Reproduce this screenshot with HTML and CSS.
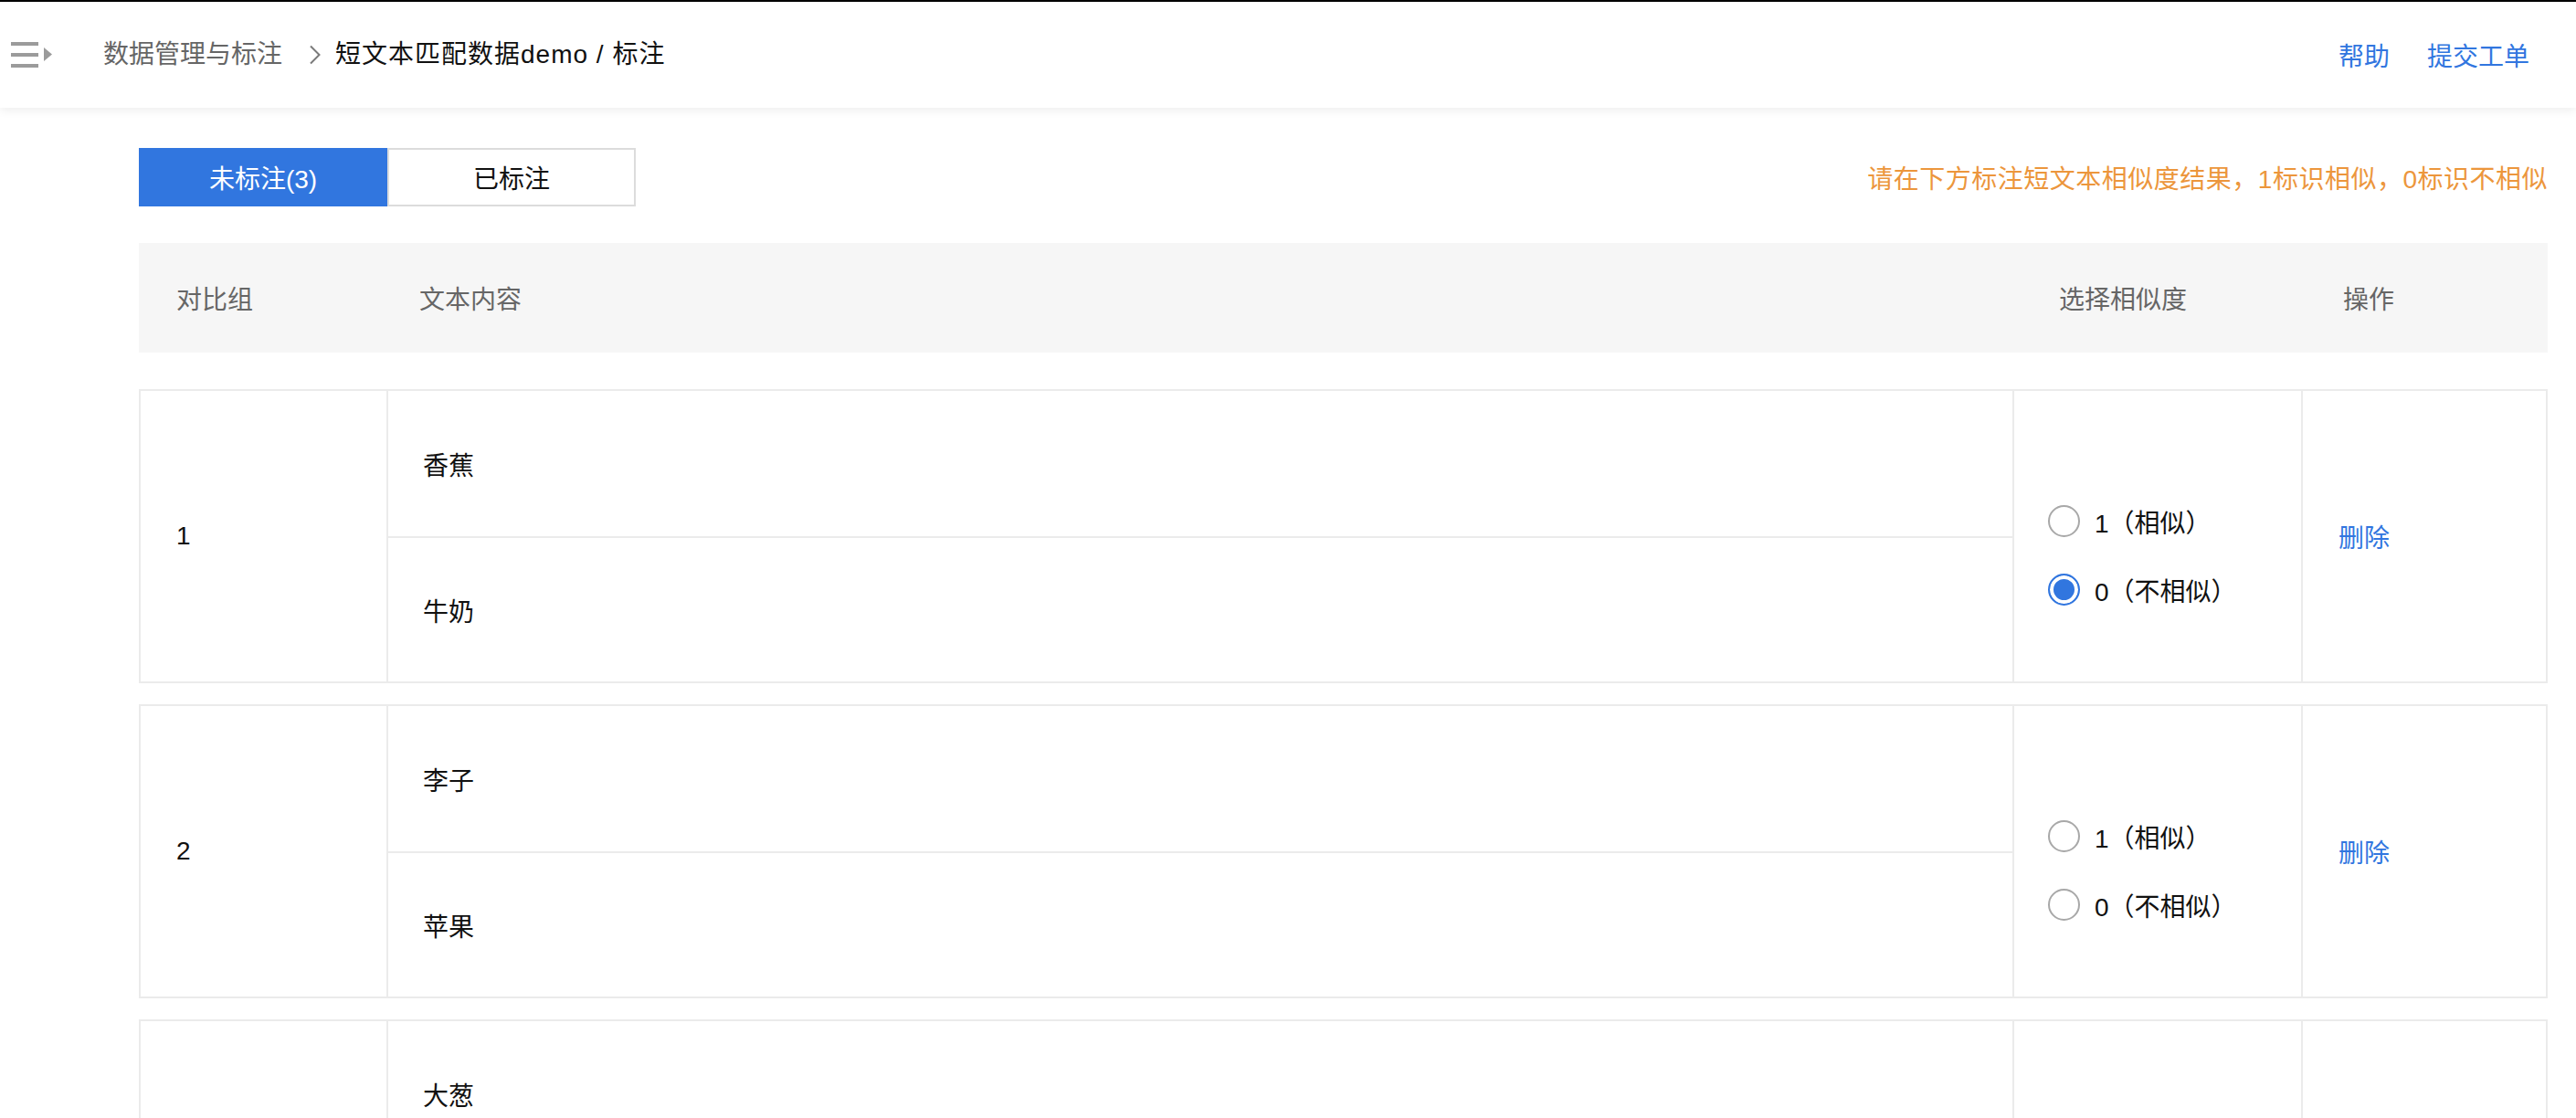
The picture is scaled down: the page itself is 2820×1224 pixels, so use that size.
FILE: index.html
```html
<!DOCTYPE html>
<html lang="zh-CN">
<head>
<meta charset="utf-8">
<title>短文本匹配数据demo / 标注</title>
<link rel="stylesheet" href="styles.css">
</head>
<body>
<header class="topbar">
  <svg class="menu-icon" width="46" height="28" viewBox="0 0 46 28" aria-hidden="true">
    <rect x="0" y="0" width="30" height="4" fill="#9b9b9b"/>
    <rect x="0" y="12" width="30" height="4" fill="#9b9b9b"/>
    <rect x="0" y="24" width="30" height="4" fill="#9b9b9b"/>
    <path d="M36 6 L45 13.5 L36 21 Z" fill="#9b9b9b"/>
  </svg>
  <nav class="crumbs">
    <span class="crumb-parent">数据管理与标注</span>
    <svg class="crumb-sep" width="14" height="22" viewBox="0 0 14 22" aria-hidden="true">
      <path d="M2 1.5 L11.5 11 L2 20.5" fill="none" stroke="#7a7a7a" stroke-width="2"/>
    </svg>
    <span class="crumb-current">短文本匹配数据demo / 标注</span>
  </nav>
  <div class="top-links">
    <a class="top-link">帮助</a>
    <a class="top-link">提交工单</a>
  </div>
</header>

<main class="main">
  <div class="toolbar">
    <div class="tabs">
      <div class="tab tab-active">未标注(3)</div>
      <div class="tab">已标注</div>
    </div>
    <div class="hint">请在下方标注短文本相似度结果，1标识相似，0标识不相似</div>
  </div>

  <div class="thead">
    <div class="th th-group">对比组</div>
    <div class="th th-text">文本内容</div>
    <div class="th th-sim">选择相似度</div>
    <div class="th th-op">操作</div>
  </div>

  <div class="rows">
    <div class="row">
      <div class="cell cell-group">1</div>
      <div class="cell cell-texts">
        <div class="text-line">香蕉</div>
        <div class="text-line text-line-2">牛奶</div>
      </div>
      <div class="cell cell-sim">
        <label class="radio"><span class="radio-dot"></span><span class="radio-label">1（相似）</span></label>
        <label class="radio"><span class="radio-dot radio-dot-on"></span><span class="radio-label">0（不相似）</span></label>
      </div>
      <div class="cell cell-op"><a class="op-link">删除</a></div>
    </div>

    <div class="row">
      <div class="cell cell-group">2</div>
      <div class="cell cell-texts">
        <div class="text-line">李子</div>
        <div class="text-line text-line-2">苹果</div>
      </div>
      <div class="cell cell-sim">
        <label class="radio"><span class="radio-dot"></span><span class="radio-label">1（相似）</span></label>
        <label class="radio"><span class="radio-dot"></span><span class="radio-label">0（不相似）</span></label>
      </div>
      <div class="cell cell-op"><a class="op-link">删除</a></div>
    </div>

    <div class="row">
      <div class="cell cell-group">3</div>
      <div class="cell cell-texts">
        <div class="text-line">大葱</div>
        <div class="text-line text-line-2">洋葱</div>
      </div>
      <div class="cell cell-sim">
        <label class="radio"><span class="radio-dot"></span><span class="radio-label">1（相似）</span></label>
        <label class="radio"><span class="radio-dot"></span><span class="radio-label">0（不相似）</span></label>
      </div>
      <div class="cell cell-op"><a class="op-link">删除</a></div>
    </div>
  </div>
</main>
</body>
</html>
```

FILE: styles.css
```css
* {
  box-sizing: border-box;
}

html, body {
  margin: 0;
  padding: 0;
  background: #ffffff;
}

body {
  font-family: "Liberation Sans", "Noto Sans CJK SC", sans-serif;
  font-size: 28px;
  color: #1c1c1c;
}

/* ---------- top bar ---------- */
.topbar {
  position: relative;
  z-index: 2;
  height: 118px;
  border-top: 2px solid #000000;
  background: #ffffff;
  display: flex;
  align-items: center;
  padding: 0 51px 0 12px;
  box-shadow: 0 3px 10px rgba(0, 0, 0, 0.07);
}

.menu-icon {
  display: block;
  flex: none;
}

.crumbs {
  display: flex;
  align-items: center;
  margin-left: 55px;
  line-height: 40px;
}

.crumb-parent {
  color: #666666;
}

.crumb-sep {
  display: block;
  margin: 0 15px 0 29px;
}

.crumb-current {
  color: #111111;
  letter-spacing: 1px;
}

.top-links {
  margin-left: auto;
  display: flex;
  gap: 41px;
}

.top-link {
  color: #3176df;
  cursor: pointer;
}

/* ---------- main ---------- */
.main {
  padding: 44px 31px 0 152px;
}

.toolbar {
  display: flex;
  align-items: center;
  justify-content: space-between;
}

.tabs {
  display: flex;
}

.tab {
  width: 272px;
  height: 64px;
  display: flex;
  align-items: center;
  justify-content: center;
  border: 2px solid #dcdcdc;
  color: #111111;
  background: #ffffff;
}

.tab-active {
  background: #3176df;
  border-color: #3176df;
  color: #ffffff;
}

.hint {
  color: #ec963c;
  letter-spacing: 0.5px;
}

/* ---------- table header ---------- */
.thead {
  margin-top: 40px;
  height: 120px;
  background: #f6f6f6;
  display: grid;
  grid-template-columns: 271px 1fr 316px 270px;
  align-items: center;
  color: #666666;
}

.th-group { padding-left: 41px; }
.th-text  { padding-left: 36px; }
.th-sim   { padding-left: 51px; }
.th-op    { padding-left: 46px; }

/* ---------- rows ---------- */
.rows {
  margin-top: 40px;
  display: flex;
  flex-direction: column;
  gap: 23px;
}

.row {
  display: grid;
  grid-template-columns: 269px 1fr 316px 268px;
  border: 2px solid #ebebeb;
  background: #ffffff;
}

.cell {
  border-left: 2px solid #ebebeb;
}

.cell-group {
  border-left: none;
  display: flex;
  align-items: center;
  padding-left: 39px;
  color: #111111;
}

.cell-texts {
  display: flex;
  flex-direction: column;
}

.text-line {
  height: 159px;
  display: flex;
  align-items: center;
  padding-left: 38px;
  color: #111111;
}

.text-line-2 {
  border-top: 2px solid #ebebeb;
}

.cell-sim {
  display: flex;
  flex-direction: column;
  justify-content: center;
  gap: 40px;
  padding: 42px 0 0 37px;
}

.radio {
  display: flex;
  align-items: center;
  height: 35px;
  cursor: pointer;
}

.radio-dot {
  flex: none;
  width: 35px;
  height: 35px;
  border-radius: 50%;
  border: 2px solid #a8a8a8;
  background: #ffffff;
}

.radio-dot-on {
  border-color: #3176df;
  background: #3176df;
  box-shadow: inset 0 0 0 4px #ffffff;
}

.radio-label {
  margin-left: 16px;
  color: #111111;
  white-space: nowrap;
}

.cell-op {
  display: flex;
  align-items: center;
  padding-left: 39px;
}

.op-link {
  color: #3176df;
  cursor: pointer;
}
```
